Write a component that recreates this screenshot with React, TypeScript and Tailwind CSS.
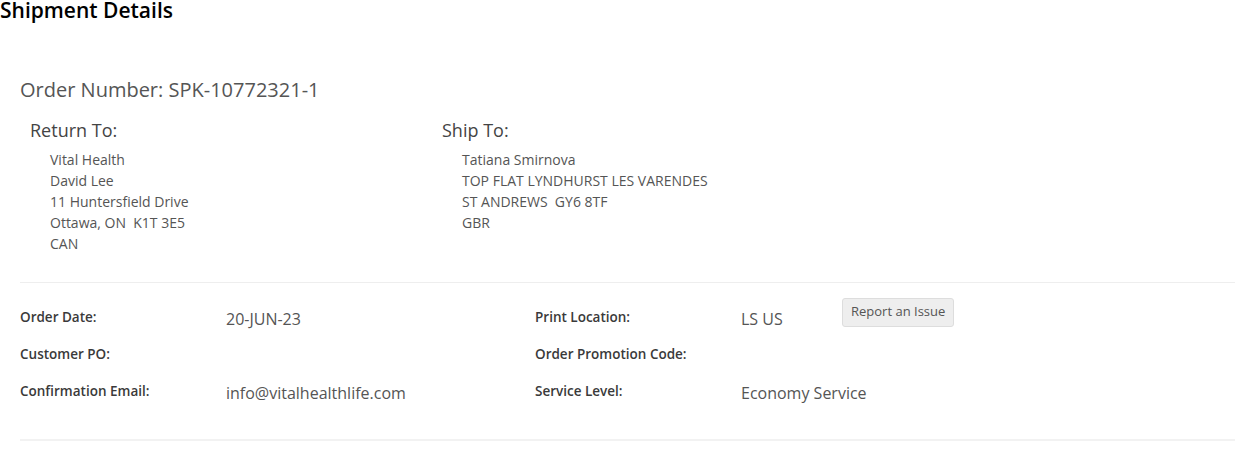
const returnTo = ['Vital Health', 'David Lee', '11 Huntersfield Drive', 'Ottawa, ON\u00a0 K1T 3E5', 'CAN'];
const shipTo = ['Tatiana Smirnova', 'TOP FLAT LYNDHURST LES VARENDES', 'ST ANDREWS\u00a0 GY6 8TF', 'GBR'];

const Address = ({ title, lines }: { title: string; lines: string[] }) => (
  <div className="pl-[10px]">
    <h3 className="text-[18px] leading-[24px] text-[#444]">{title}</h3>
    <div className="mt-[7px] pl-[20px] text-[14px] leading-[21px] text-[#555]">
      {lines.map((l) => (
        <div key={l}>{l}</div>
      ))}
    </div>
  </div>
);

const Field = ({ label, value, extra }: { label: string; value?: string; extra?: React.ReactNode }) => (
  <div className="flex h-[37px] items-center">
    <div className="w-[206px] text-[13.5px] font-semibold text-[#3a3a3a]">{label}</div>
    <div className="w-[102px] whitespace-nowrap pt-[3px] text-[16px] text-[#555]">{value}</div>
    {extra}
  </div>
);

export default function App() {
  return (
    <div className="h-[454px] w-[1238px] bg-white font-['Open_Sans',sans-serif]">
      <h1 className="-mt-[5px] text-[21px] font-semibold leading-[30px] text-black">Shipment Details</h1>

      <div className="pl-[20px] pr-[3px] pt-[51px]">
        <h2 className="text-[20px] leading-[28px] text-[#555]">Order Number: SPK-10772321-1</h2>

        <div className="mt-[14px] grid grid-cols-[412px_1fr]">
          <Address title="Return To:" lines={returnTo} />
          <Address title="Ship To:" lines={shipTo} />
        </div>

        <div className="mt-[28px] border-t border-[#eee] pt-[16px] pb-[29px]">
          <div className="grid grid-cols-[515px_1fr]">
            <div>
              <Field label="Order Date:" value="20-JUN-23" />
              <Field label="Customer PO:" />
              <Field label="Confirmation Email:" value="info@vitalhealthlife.com" />
            </div>
            <div>
              <Field
                label="Print Location:"
                value="LS US"
                extra={
                  <button className="-mt-[11px] ml-[-1px] h-[29px] rounded-[3px] border border-[#ddd] bg-[#eee] px-[8px] text-[13px] text-[#555]">
                    Report an Issue
                  </button>
                }
              />
              <Field label="Order Promotion Code:" />
              <Field label="Service Level:" value="Economy Service" />
            </div>
          </div>
        </div>
        <div className="border-t-2 border-[#f2f2f2]" />
      </div>
    </div>
  );
}
